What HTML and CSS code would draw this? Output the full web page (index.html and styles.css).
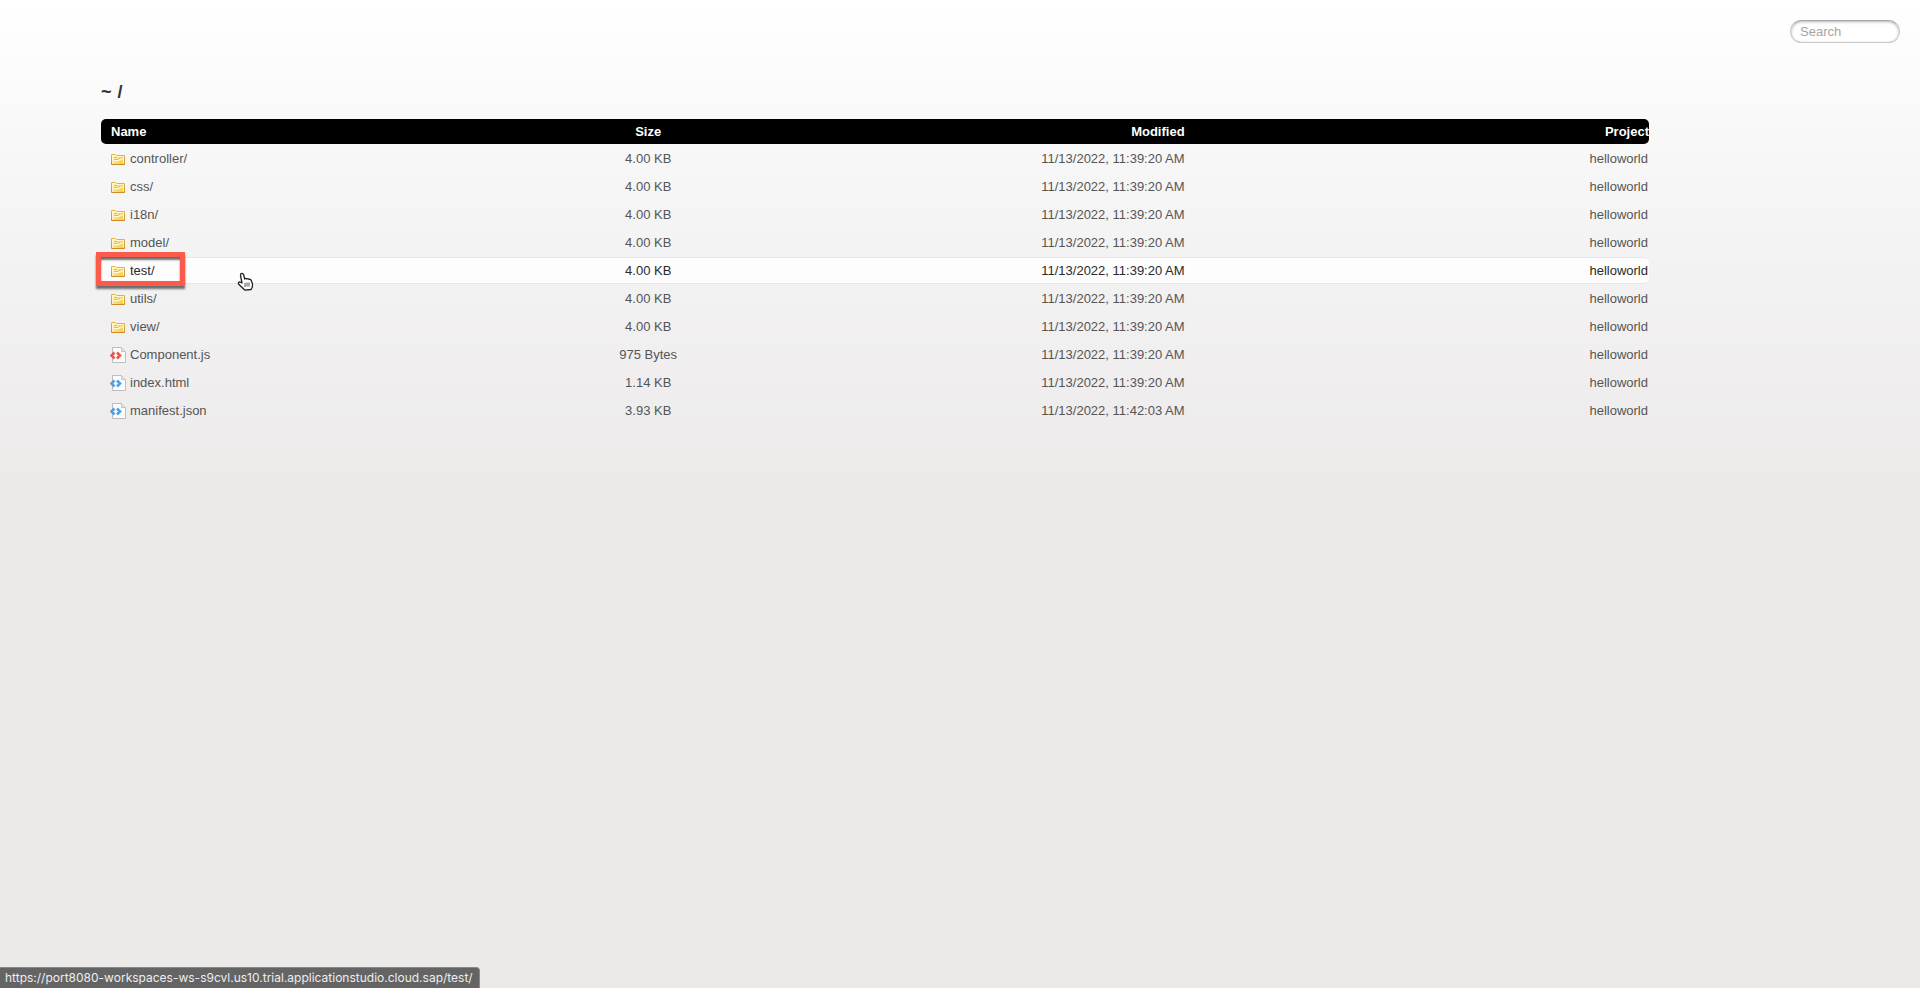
FILE: index.html
```html
<!DOCTYPE html>
<html lang="en">
<head>
<meta charset="utf-8">
<title>listing directory /</title>
<link rel="stylesheet" href="styles.css">
</head>
<body>
<svg class="defs" width="0" height="0" aria-hidden="true">
  <defs>
    <linearGradient id="gold" x1="0" y1="0" x2="1" y2="1">
      <stop offset="0" stop-color="#fffbe0"/><stop offset=".55" stop-color="#f8e274"/><stop offset="1" stop-color="#f0c832"/>
    </linearGradient>
    <linearGradient id="rim" x1="0" y1="0" x2="0" y2="1">
      <stop offset="0" stop-color="#e6b548"/><stop offset="1" stop-color="#d08a2a"/>
    </linearGradient>
    <symbol id="folder" viewBox="0 0 16 16">
      <path d="M1.500 13.500v-10h4l1 1h8v9z" fill="url(#gold)" stroke="url(#rim)"/>
      <path d="M2.500 12.500v-8h3.500l1 1h6.500v7" fill="none" stroke="#fff6cc"/>
      <path d="M4 6.500h3M4 8.500h4l1-1.500h4" fill="none" stroke="#efb95a"/>
      <path d="M4 9.500h5l1-1.500h3" fill="none" stroke="#fffbe6"/>
    </symbol>
    <symbol id="page" viewBox="0 0 16 16">
      <path d="M2.500.500h9l4 4v11h-13z" fill="#fbfbfb" stroke="#bdbdbd"/>
      <path d="M11.500.500v4h4" fill="#e4e4e4" stroke="#c6c6c6"/>
      <path d="M4.500 5.500 1.500 8.500l3 3M7 5.500l3 3-3 3" fill="none" stroke="currentColor" stroke-width="2.600"/>
    </symbol>
  </defs>
</svg>

<input class="search" id="search" type="text" placeholder="Search" aria-label="Search" autocomplete="off">

<main class="wrapper">
  <h1 class="path"><a href="#">~</a><span>/</span></h1>
  <table class="files">
    <thead>
      <tr><th class="name">Name</th><th class="size">Size</th><th class="date">Modified</th><th class="project">Project</th></tr>
    </thead>
    <tbody>
      <tr><td class="name"><a href="#"><svg class="icon"><use href="#folder"/></svg>controller/</a></td><td class="size">4.00 KB</td><td class="date">11/13/2022, 11:39:20 AM</td><td class="project">helloworld</td></tr>
      <tr><td class="name"><a href="#"><svg class="icon"><use href="#folder"/></svg>css/</a></td><td class="size">4.00 KB</td><td class="date">11/13/2022, 11:39:20 AM</td><td class="project">helloworld</td></tr>
      <tr><td class="name"><a href="#"><svg class="icon"><use href="#folder"/></svg>i18n/</a></td><td class="size">4.00 KB</td><td class="date">11/13/2022, 11:39:20 AM</td><td class="project">helloworld</td></tr>
      <tr><td class="name"><a href="#"><svg class="icon"><use href="#folder"/></svg>model/</a></td><td class="size">4.00 KB</td><td class="date">11/13/2022, 11:39:20 AM</td><td class="project">helloworld</td></tr>
      <tr class="active"><td class="name"><a href="#"><svg class="icon"><use href="#folder"/></svg>test/</a><span class="marker"></span>
        <svg class="cursor" viewBox="0 0 17 19" aria-hidden="true">
          <path d="M5 11 3.500 3.500Q3.300 1.500 4.700 1.300T6.700 3L7.700 7Q8.500 5.800 9.800 7 11 6 12 7.500 13.500 6.800 14.300 8.500L15.500 12Q16 15 14 17.500L8 18.200Q4.500 15 1.500 12 1 10 3 10z" fill="#fff" stroke="#222" stroke-width="1.300" stroke-linejoin="round"/>
          <path d="M8 11v4M10 10.500v4M12 10.500v4" stroke="#555"/>
        </svg></td><td class="size">4.00 KB</td><td class="date">11/13/2022, 11:39:20 AM</td><td class="project">helloworld</td></tr>
      <tr><td class="name"><a href="#"><svg class="icon"><use href="#folder"/></svg>utils/</a></td><td class="size">4.00 KB</td><td class="date">11/13/2022, 11:39:20 AM</td><td class="project">helloworld</td></tr>
      <tr><td class="name"><a href="#"><svg class="icon"><use href="#folder"/></svg>view/</a></td><td class="size">4.00 KB</td><td class="date">11/13/2022, 11:39:20 AM</td><td class="project">helloworld</td></tr>
      <tr><td class="name"><a href="#"><svg class="icon script"><use href="#page"/></svg>Component.js</a></td><td class="size">975 Bytes</td><td class="date">11/13/2022, 11:39:20 AM</td><td class="project">helloworld</td></tr>
      <tr><td class="name"><a href="#"><svg class="icon markup"><use href="#page"/></svg>index.html</a></td><td class="size">1.14 KB</td><td class="date">11/13/2022, 11:39:20 AM</td><td class="project">helloworld</td></tr>
      <tr><td class="name"><a href="#"><svg class="icon markup"><use href="#page"/></svg>manifest.json</a></td><td class="size">3.93 KB</td><td class="date">11/13/2022, 11:42:03 AM</td><td class="project">helloworld</td></tr>
    </tbody>
  </table>
</main>

<div class="status">https://port8080-workspaces-ws-s9cvl.us10.trial.applicationstudio.cloud.sap/test/</div>
</body>
</html>
```
FILE: styles.css
```css
* {
  box-sizing: border-box;
}

body {
  margin: 0;
  min-height: 100vh;
  padding: 81px 99px 80px 101px;
  font: 13px/20px "Helvetica Neue", "Liberation Sans", Arial, sans-serif;
  color: #555;
  background: linear-gradient(#fff 0, #f5f5f5 200px, #f0eeef 370px, #ebeae8 500px, #ebeae8 100%) no-repeat #ebeae8;
}

a {
  color: inherit;
  text-decoration: none;
}

.defs {
  position: absolute;
}

.search {
  position: fixed;
  top: 20px;
  right: 20px;
  width: 110px;
  height: 23px;
  padding: 0 9px;
  border: 1px solid #c8c8c8;
  border-top-color: #a8a8a8;
  border-radius: 12px;
  outline: none;
  font: inherit;
  color: #555;
  background: #fff;
  box-shadow: inset 0 1px 3px rgba(0, 0, 0, .3);
}

.search::placeholder {
  color: #a5a5a5;
}

.path {
  display: flex;
  gap: 6px;
  margin: 0 0 15px;
  font-size: 18px;
  line-height: 22px;
  color: #333;
}

.files {
  width: 90%;
  table-layout: fixed;
  border-spacing: 0 1px;
}

.files th,
.files td {
  padding: 0;
  text-align: right;
  white-space: nowrap;
}

.files th {
  height: 25px;
  color: #fff;
  background: #000;
}

.files td {
  height: 27px;
  border: 1px solid transparent;
  border-width: 1px 0;
}

.files .name {
  position: relative;
  width: 30%;
  padding-left: 10px;
  text-align: left;
}

.files .size {
  width: 10.7%;
  text-align: center;
}

.files .date {
  width: 29.3%;
}

.files .project {
  width: 30%;
}

.files td.project {
  padding-right: 1px;
}

.files th:first-child,
.files td:first-child {
  border-radius: 5px 0 0 5px;
}

.files th:last-child,
.files td:last-child {
  border-radius: 0 5px 5px 0;
}

.files td.name {
  padding-left: 9px;
}

.files .name a {
  display: flex;
  align-items: center;
  gap: 4px;
}

.icon {
  width: 16px;
  height: 16px;
}

.script {
  color: #ee5248;
}

.markup {
  color: #4c9fee;
}

.active td {
  color: #2a2a2a;
  background: #fdfdfd;
  border-color: #e6e6e6;
}

.marker {
  position: absolute;
  top: -6px;
  left: -5px;
  width: 89px;
  height: 34px;
  border: 5px solid #fc5b4b;
  box-shadow: 0 3px 2px rgba(0, 0, 0, .55), inset 0 3px 2px rgba(0, 0, 0, .55);
}

.cursor {
  position: absolute;
  top: 14px;
  left: 136px;
  width: 17px;
  height: 19px;
}

.status {
  position: fixed;
  bottom: 0;
  left: 0;
  height: 21px;
  padding: 0 6px 0 5px;
  border-top: 1px solid #8a8a8a;
  border-right: 1px solid #8a8a8a;
  border-radius: 0 4px 0 0;
  font: 12px/20px Inter, sans-serif;
  color: #eee;
  background: #646464;
}
```
